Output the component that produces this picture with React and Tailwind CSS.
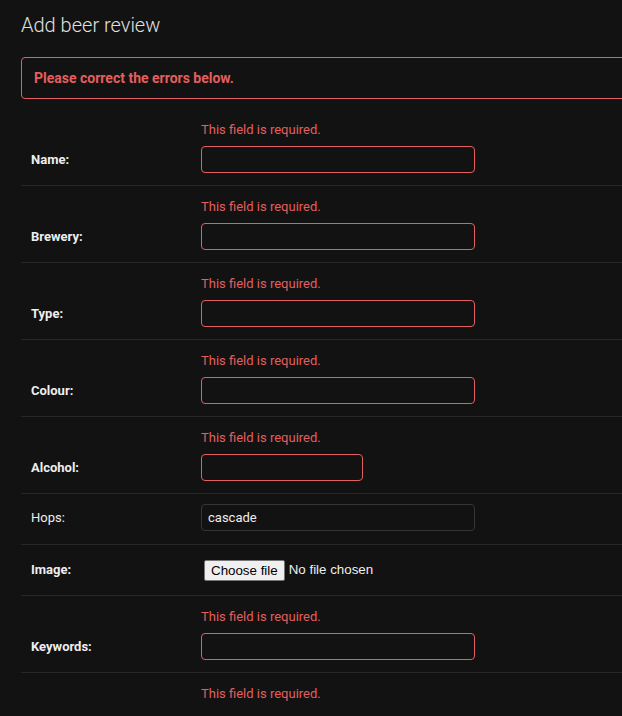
import { useState } from "react";

const fields = [
  { name: "name", label: "Name:", required: true, error: true },
  { name: "brewery", label: "Brewery:", required: true, error: true },
  { name: "type", label: "Type:", required: true, error: true },
  { name: "colour", label: "Colour:", required: true, error: true },
  { name: "alcohol", label: "Alcohol:", required: true, error: true, narrow: true },
  { name: "hops", label: "Hops:", required: false, error: false, value: "cascade" },
  { name: "image", label: "Image:", required: true, file: true },
  { name: "keywords", label: "Keywords:", required: true, error: true },
  { name: "review", label: "Review:", required: true, error: true, textarea: true },
];

function FormRow({ field, value, onChange }) {
  const labelClass = `w-[180px] shrink-0 pl-[10px] text-[13px] text-[#eeeeee] ${field.required ? "font-bold" : "font-normal"}`;

  if (field.file) {
    return (
      <div className="border-b border-[#272727] py-[10px]">
        <div className="flex h-[30px] items-center">
          <label className={labelClass}>{field.label}</label>
          <div className="ml-[3px] flex items-center font-['Liberation_Sans',Arial,sans-serif] text-[13.333px]">
            <span className="rounded-[2px] border border-[#767676] bg-[#efefef] px-[6px] leading-[19px] text-black">Choose file</span>
            <span className="ml-[4px] text-[#eeeeee]">No file chosen</span>
          </div>
        </div>
      </div>
    );
  }

  const inputClass = `rounded-[4px] border bg-[#121212] px-[6px] text-[13px] text-[#eeeeee] outline-none ${field.narrow ? "w-[162px]" : "w-[274px]"} ${field.error ? "border-[#e35f5f]" : "border-[#353535]"}`;

  return (
    <div className={`border-b border-[#272727] ${field.error ? "pb-[12px] pt-[11px]" : "pb-[13px] pt-[10px]"}`}>
      {field.error ? <p className="mb-[6px] ml-[180px] text-[13px] leading-[20px] text-[#e35f5f]">This field is required.</p> : null}
      {field.textarea ? (
        <div className="mt-[40px] flex items-start">
          <label htmlFor={field.name} className={`${labelClass} pt-[4px]`}>
            {field.label}
          </label>
          <textarea id={field.name} rows={6} value={value} onChange={(event) => onChange(field.name, event.target.value)} className={`${inputClass} py-[5px]`} />
        </div>
      ) : (
        <div className="flex items-center">
          <label htmlFor={field.name} className={labelClass}>
            {field.label}
          </label>
          <input id={field.name} value={value} onChange={(event) => onChange(field.name, event.target.value)} className={`${inputClass} h-[27px]`} />
        </div>
      )}
    </div>
  );
}

export default function App() {
  const [values, setValues] = useState({ hops: "cascade" });
  const update = (name, value) => setValues((prev) => ({ ...prev, [name]: value }));

  return (
    <div className="h-screen w-full overflow-hidden bg-[#121212] font-['Roboto',sans-serif]">
      <div className="w-[760px] pl-[21px] pt-[10px]">
        <h1 className="mb-[17px] text-[20px] font-light leading-[30px] text-[#e0e0e0]">Add beer review</h1>
        <p className="mb-[10px] rounded-[4px] border border-[#e35f5f] px-[12px] py-[10px] text-[14px] font-bold leading-[20px] text-[#e35f5f]">
          Please correct the errors below.
        </p>
        <form>
          {fields.map((field) => (
            <FormRow key={field.name} field={field} value={values[field.name] || ""} onChange={update} />
          ))}
        </form>
      </div>
    </div>
  );
}
